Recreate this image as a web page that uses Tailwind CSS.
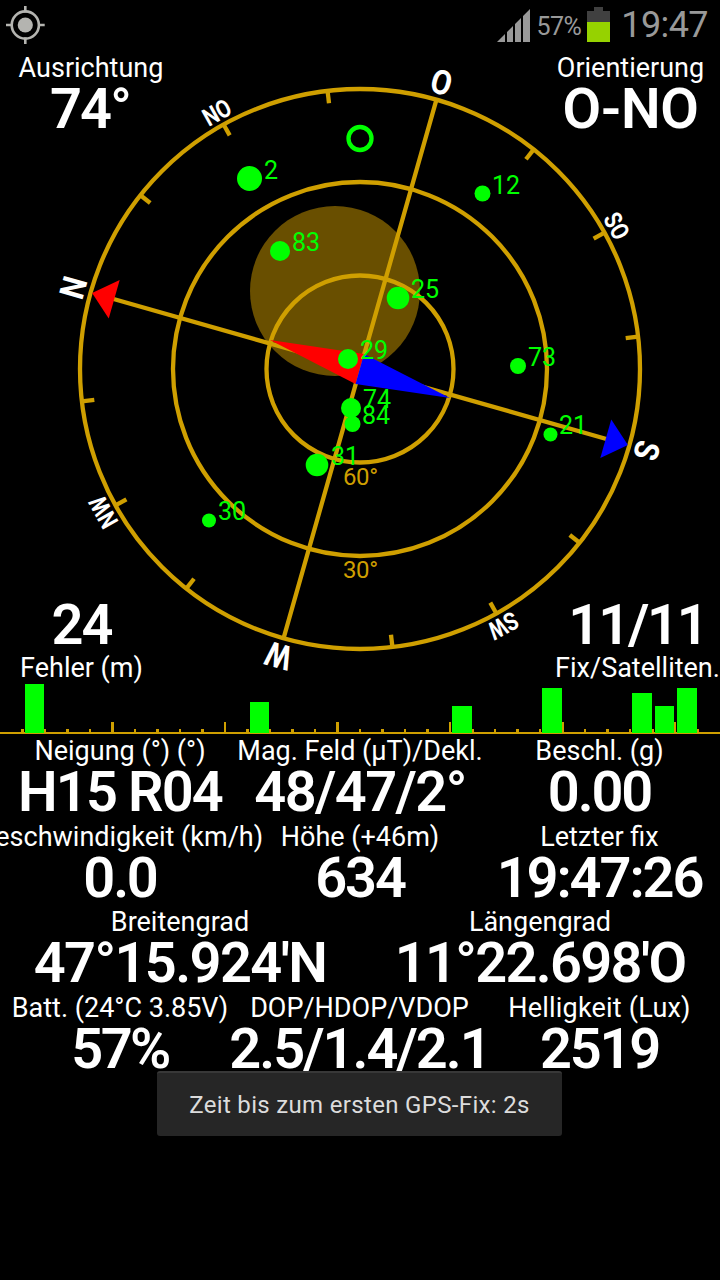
<!DOCTYPE html>
<html lang="de">
<head>
    <meta charset="UTF-8">
    <meta name="viewport" content="width=device-width, initial-scale=1.0">
    <title>GPS Status</title>
    <script src="https://cdn.jsdelivr.net/npm/@tailwindcss/browser@4"></script>
</head>
<body class="bg-black">
    <div class="relative flex flex-col w-[720px] h-[1280px] overflow-hidden bg-black text-white font-['Roboto',sans-serif] whitespace-nowrap">

        <!-- Status bar -->
        <header class="flex items-center justify-between h-[50px] shrink-0 pl-1.5 pr-3">
            <svg class="size-[39px]" viewBox="0 0 39 39" fill="none" stroke="#b4b4b0" stroke-width="2.6">
                <circle cx="19.3" cy="19" r="13.6"/>
                <circle cx="19.3" cy="19" r="7.6" fill="#b4b4b0" stroke="none"/>
                <path d="M19.3 0V6.500M19.3 31.500V38M0 19h6.500M32 19h6.700"/>
            </svg>
            <div class="flex items-center text-[#999]">
                <svg class="w-[33px] h-[34px]" viewBox="0 0 33 34" fill="#999">
                    <path d="M0 34L8 26V34zM10 34V24L16 18V34zM18 34V16L24 10V34zM26 34V8L33 1V34z"/>
                </svg>
                <span class="ml-[6px] pt-[3px] text-[25px] leading-[50px] tracking-[-0.5px]">57%</span>
                <svg class="ml-[6px] mb-[2px] w-[23px] h-[35px]" viewBox="0 0 23 35">
                    <path d="M7 0h9v4h7v12H0V4h7z" fill="#404040"/>
                    <path d="M0 15h23v20H0z" fill="#96d200"/>
                </svg>
                <span class="ml-[11px] text-[36px] leading-[50px] tracking-[-0.6px]">19:47</span>
            </div>
        </header>

        <!-- Compass with sky view -->
        <section class="relative flex flex-col justify-between h-[634px] shrink-0">
            <svg class="absolute left-0 top-0 w-[720px] h-[632px]" viewBox="0 50 720 632">
                <circle cx="335" cy="291" r="85" fill="#694f00"/>
                <g fill="none" stroke="#cf9f00" stroke-width="4.3">
                    <circle cx="360" cy="369" r="280"/>
                    <circle cx="360" cy="369" r="187"/>
                    <circle cx="360" cy="369" r="93.500"/>
                </g>
                <g transform="translate(360 369) rotate(-74.15)" stroke="#cf9f00" stroke-width="4.3">
                    <path d="M0 -258V258M-280 0H280"/>
                    <g id="ticks"></g>
                    <path d="M0 -278.500L20 -255.500H-20z" fill="#f00" stroke="none"/>
                    <path d="M0 278.500L20 255.500H-20z" fill="#00f" stroke="none"/>
                </g>
                <path d="M270 340L364 354L355.500 384z" fill="#f00"/>
                <path d="M450 398L364 354L355.500 384z" fill="#00f"/>
                <g id="letters" fill="#fff" font-weight="700" text-anchor="middle"></g>
                <g fill="#cf9f00" font-size="24" letter-spacing="-0.4">
                    <text x="343" y="485">60°</text>
                    <text x="343" y="578">30°</text>
                </g>
                <circle cx="360" cy="138.500" r="11.500" fill="none" stroke="#0f0" stroke-width="4.3"/>
                <g id="sats" fill="#0f0" font-size="25"></g>
            </svg>

            <div class="relative flex justify-between pt-[2px] text-center">
                <div class="w-[182px]">
                    <div class="text-[27px] leading-[32px]">Ausrichtung</div>
                    <div class="pr-[2px] text-[56px] leading-[50px] font-semibold tracking-[-1.8px]">74°</div>
                </div>
                <div class="w-[179px]">
                    <div class="text-[27px] leading-[32px]">Orientierung</div>
                    <div class="text-[56px] leading-[50px] font-semibold tracking-[-0.3px]">O-NO</div>
                </div>
            </div>
            <div class="relative flex justify-between text-center">
                <div class="w-[163px]">
                    <div class="text-[56px] leading-[54px] font-semibold tracking-[-2px]">24</div>
                    <div class="text-[27px] leading-[32px]">Fehler (m)</div>
                </div>
                <div class="w-[165px]">
                    <div class="text-[56px] leading-[54px] font-semibold tracking-[-2.2px]">11/11</div>
                    <div class="text-[27px] leading-[32px]">Fix/Satelliten.</div>
                </div>
            </div>
        </section>

        <!-- Signal strength bars -->
        <svg class="w-[720px] h-[51px] shrink-0" viewBox="0 684 720 51" shape-rendering="crispEdges">
            <g id="scale" fill="#cf9f00"><rect x="0" y="732" width="720" height="2"/></g>
            <g id="bars" fill="#0f0"></g>
        </svg>

        <!-- Readings -->
        <section class="flex flex-col gap-[3.6px] text-center">
            <div class="flex">
                <div class="w-[240px] flex flex-col items-center">
                    <div class="text-[27px] leading-[32px]">Neigung (°) (°)</div>
                    <div class="text-[56px] leading-[50px] font-semibold tracking-[-1.9px]">H15 R04</div>
                </div>
                <div class="w-[240px] flex flex-col items-center">
                    <div class="text-[27px] leading-[32px]">Mag. Feld (µT)/Dekl.</div>
                    <div class="text-[56px] leading-[50px] font-semibold tracking-[-1.6px]">48/47/2°</div>
                </div>
                <div class="w-[239px] flex flex-col items-center">
                    <div class="text-[27px] leading-[32px]">Beschl. (g)</div>
                    <div class="text-[56px] leading-[50px] font-semibold tracking-[-2.1px]">0.00</div>
                </div>
            </div>
            <div class="flex">
                <div class="w-[240px] flex flex-col items-center">
                    <div class="text-[27px] leading-[32px]">Geschwindigkeit (km/h)</div>
                    <div class="text-[56px] leading-[50px] font-semibold tracking-[-2.2px]">0.0</div>
                </div>
                <div class="w-[240px] flex flex-col items-center">
                    <div class="text-[27px] leading-[32px]">Höhe (+46m)</div>
                    <div class="text-[56px] leading-[50px] font-semibold tracking-[-2.1px]">634</div>
                </div>
                <div class="w-[239px] flex flex-col items-center">
                    <div class="text-[27px] leading-[32px]">Letzter fix</div>
                    <div class="text-[56px] leading-[50px] font-semibold tracking-[-2.1px]">19:47:26</div>
                </div>
            </div>
            <div class="flex">
                <div class="w-[360px] flex flex-col items-center">
                    <div class="text-[27px] leading-[32px]">Breitengrad</div>
                    <div class="text-[56px] leading-[50px] font-semibold tracking-[-1.6px]">47°15.924'N</div>
                </div>
                <div class="w-[360px] flex flex-col items-center">
                    <div class="text-[27px] leading-[32px]">Längengrad</div>
                    <div class="text-[56px] leading-[50px] font-semibold tracking-[-1.7px]">11°22.698'O</div>
                </div>
            </div>
            <div class="flex">
                <div class="w-[240px] flex flex-col items-center">
                    <div class="text-[27px] leading-[32px]">Batt. (24°C 3.85V)</div>
                    <div class="text-[56px] leading-[50px] font-semibold tracking-[-2.6px]">57%</div>
                </div>
                <div class="w-[239px] flex flex-col items-center">
                    <div class="text-[27px] leading-[32px]">DOP/HDOP/VDOP</div>
                    <div class="text-[56px] leading-[50px] font-semibold tracking-[-2px]">2.5/1.4/2.1</div>
                </div>
                <div class="w-[241px] flex flex-col items-center">
                    <div class="text-[27px] leading-[32px] tracking-[0.2px]">Helligkeit (Lux)</div>
                    <div class="text-[56px] leading-[50px] font-semibold tracking-[-2.3px]">2519</div>
                </div>
            </div>
        </section>

        <!-- Toast -->
        <div class="absolute left-[157px] top-[1071px] w-[405px] h-[65px] rounded-[3px] border-t-2 border-[#383838] bg-[#262626] text-center text-[24px] leading-[65px] tracking-[0.33px] text-[#dcdcdc]">Zeit bis zum ersten GPS-Fix: 2s</div>
    </div>

    <script>
        // ticks every 22.5 degrees between the main axes
        var ticks = '';
        for (var i = 0; i < 16; i++) {
            if (i % 4) ticks += '<path d="M0 -280V-267.5" transform="rotate(' + i * 22.5 + ')"/>';
        }
        document.getElementById('ticks').innerHTML = ticks;

        var letters = ['N', 'NO', 'O', 'SO', 'S', 'SW', 'W', 'NW'];
        document.getElementById('letters').innerHTML = letters.map(function(name, i) {
            var big = name.length === 1;
            return '<text y="' + (big ? -286 : -285) + '" font-size="' + (big ? 34 : 25) + '" transform="translate(360 369) rotate(' + (-74.15 + i * 45) + ') scale(' + (big ? 0.88 : 0.82) + ' 1)">' + name + '</text>';
        }).join('');

        // cx, cy, r, label, label x, baseline
        var sats = [
            [249.5, 178.5, 12.5, '2', 264, 179],
            [482.5, 193.5, 8, '12', 492, 194],
            [280, 251, 10, '83', 292, 251],
            [398, 298, 11.3, '25', 411, 298],
            [348, 359, 10, '29', 360, 359],
            [351, 408, 10, '74', 363, 408],
            [352.5, 424, 8, '84', 362, 424],
            [317, 465, 11.3, '31', 331, 465],
            [209, 520.5, 7, '30', 218, 520],
            [518, 366, 8, '73', 528, 366],
            [550.5, 434.5, 7, '21', 559, 434]
        ];
        document.getElementById('sats').innerHTML = sats.map(function(s) {
            return '<circle cx="' + s[0] + '" cy="' + s[1] + '" r="' + s[2] + '"/><text x="' + s[4] + '" y="' + s[5] + '">' + s[3] + '</text>';
        }).join('');

        var marks = '';
        for (var n = 1; n < 32; n++) {
            var h = n % 5 ? 3 : 10;
            marks += '<rect x="' + (n * 22.5 - 1.25) + '" y="' + (732 - h) + '" width="2.5" height="' + h + '"/>';
        }
        document.getElementById('scale').innerHTML += marks;

        var bars = [[25, 684, 19], [250, 702, 19], [452, 706, 20], [542, 688, 20], [632, 693, 20], [655, 706, 19], [677, 688, 20]];
        document.getElementById('bars').innerHTML = bars.map(function(b) {
            return '<rect x="' + b[0] + '" y="' + b[1] + '" width="' + b[2] + '" height="' + (733 - b[1]) + '"/>';
        }).join('');
    </script>
</body>
</html>
